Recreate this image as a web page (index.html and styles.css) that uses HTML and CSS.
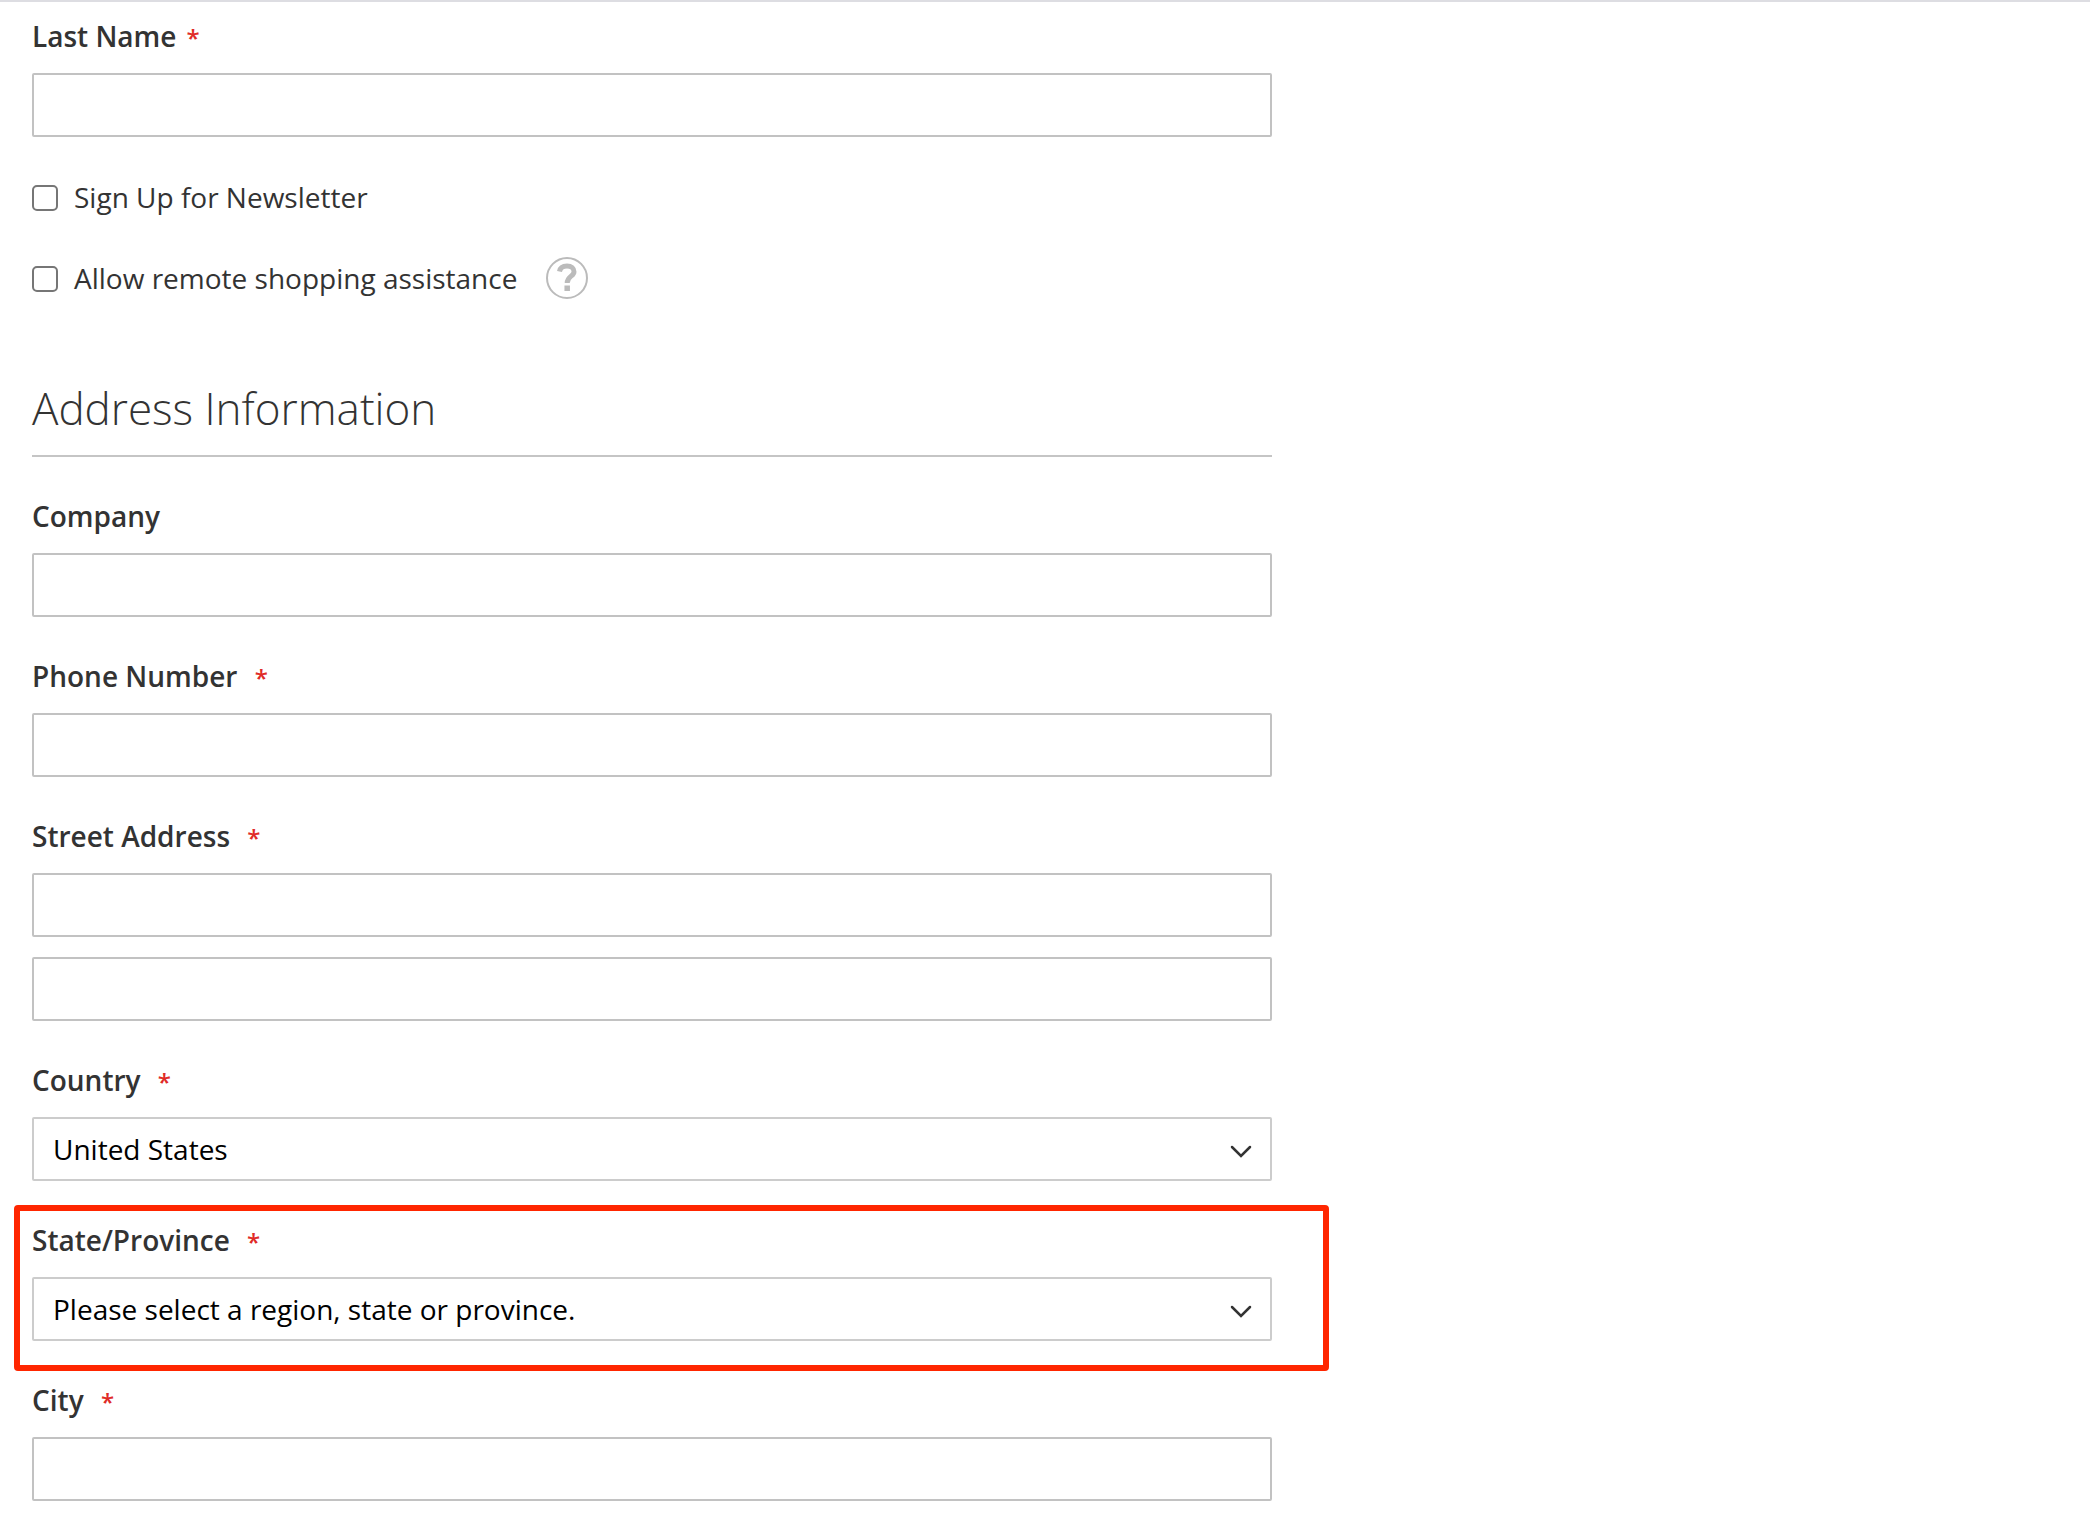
FILE: index.html
```html
<!doctype html>
<html lang="en">
  <head>
    <meta charset="UTF-8" />
    <meta name="viewport" content="width=device-width, initial-scale=1" />
    <title>New Customer</title>
    <link rel="stylesheet" href="styles.css" />
  </head>
  <body>
    <main class="page">
      <form class="form">
        <div class="field">
          <label class="label" for="lastname">Last Name<span class="required">*</span></label>
          <input class="control" type="text" id="lastname" required />
        </div>
        <div class="field choice">
          <input class="checkbox" type="checkbox" id="newsletter" />
          <label for="newsletter">Sign Up for Newsletter</label>
        </div>
        <div class="field choice">
          <input class="checkbox" type="checkbox" id="assistance" />
          <label for="assistance">Allow remote shopping assistance</label>
          <button class="help" type="button" aria-label="Help">
            <svg width="42" height="42" viewBox="0 0 42 42" fill="none" stroke="#bbb">
              <circle cx="21" cy="21" r="20" stroke-width="2" />
              <path d="M13.5 14.5C14.2 10.5 17 9 21 9C25.5 9 28 11.500 28 14.700C28 19.500 21.200 19 21.200 26" stroke-width="5" />
              <path d="M21.200 28.500V34" stroke-width="5.500" />
            </svg>
          </button>
        </div>

        <h2 class="legend">Address Information</h2>

        <div class="field">
          <label class="label" for="company">Company</label>
          <input class="control" type="text" id="company" />
        </div>
        <div class="field">
          <label class="label" for="telephone">Phone Number <span class="required">*</span></label>
          <input class="control" type="text" id="telephone" required />
        </div>
        <div class="field">
          <label class="label" for="street_1">Street Address <span class="required">*</span></label>
          <input class="control" type="text" id="street_1" required />
          <input class="control street-line" type="text" id="street_2" aria-label="Street Address: Line 2" />
        </div>
        <div class="field">
          <label class="label" for="country">Country <span class="required">*</span></label>
          <div class="select">
            <select class="control" id="country">
              <option>United States</option>
            </select>
            <svg class="arrow" width="22" height="14" viewBox="0 0 22 14">
              <path d="M2 2L11 11L20 2" />
            </svg>
          </div>
        </div>
        <div class="field highlight">
          <label class="label" for="region">State/Province <span class="required">*</span></label>
          <div class="select">
            <select class="control" id="region">
              <option>Please select a region, state or province.</option>
            </select>
            <svg class="arrow" width="22" height="14" viewBox="0 0 22 14">
              <path d="M2 2L11 11L20 2" />
            </svg>
          </div>
        </div>
        <div class="field">
          <label class="label" for="city">City <span class="required">*</span></label>
          <input class="control" type="text" id="city" required />
        </div>
      </form>
    </main>
  </body>
</html>
```
FILE: styles.css
```css
* {
  box-sizing: border-box;
}

body {
  margin: 0;
  color: #333;
  background: #fff;
  font-family: "Open Sans", "Noto Sans", sans-serif;
  font-size: 28px;
  line-height: 40px;
}

.page {
  padding: 15px 32px 16px;
  border-top: 2px solid #dddde2;
}

.form {
  max-width: 1240px;
}

.field {
  margin-bottom: 40px;
}
.field:last-child {
  margin-bottom: 0;
}

.label {
  display: block;
  margin-bottom: 18px;
  font-weight: 600;
  line-height: 38px;
}

.required {
  margin-left: 10px;
  color: #e02b27;
  font-size: 24px;
  line-height: 1;
}

.control {
  display: block;
  width: 100%;
  height: 64px;
  padding: 0 19px;
  border: 2px solid #c2c2c2;
  border-radius: 2px;
  background: #fff;
  color: #000;
  font: inherit;
}

.street-line {
  margin-top: 20px;
}

/* checkboxes */
.choice {
  display: flex;
  align-items: center;
}

.checkbox {
  appearance: none;
  width: 26px;
  height: 26px;
  margin: 2px 16px 0 0;
  border: 2px solid #767676;
  border-radius: 5px;
  background: #fff;
}
.checkbox:checked {
  background: #1979c3;
}

.help {
  height: 42px;
  margin-left: 29px;
  padding: 0;
  border: none;
  background: none;
  cursor: pointer;
}
.help svg {
  display: block;
}

.legend {
  margin: 82px 0 40px;
  padding-bottom: 20px;
  border-bottom: 2px solid #c5c5c5;
  font-size: 44px;
  font-weight: 300;
  line-height: 54px;
}

/* selects */
.select {
  position: relative;
}
.select .control {
  appearance: none;
  border-color: #ccc;
}

.arrow {
  position: absolute;
  top: 28px;
  right: 20px;
  fill: none;
  stroke: #333;
  stroke-width: 2.5;
  stroke-linecap: round;
  pointer-events: none;
}

/* red frame around the region field */
.highlight {
  position: relative;
}
.highlight::after {
  content: "";
  position: absolute;
  top: -16px;
  right: -57px;
  bottom: -30px;
  left: -18px;
  border: 6px solid #ff2600;
  border-radius: 4px;
  pointer-events: none;
}
```
